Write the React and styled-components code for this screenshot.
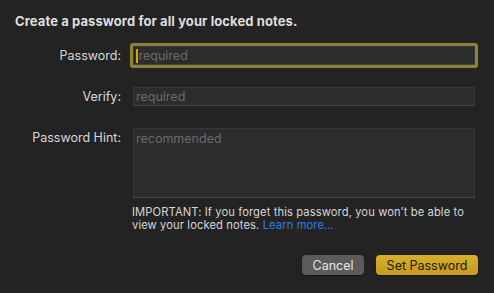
import React from "react";
import styled, { createGlobalStyle } from "styled-components";

const Global = createGlobalStyle`
  html, body { margin: 0; padding: 0; background: #232323; }
  body { font-family: Inter, "Noto Sans", "Liberation Sans", sans-serif; -webkit-font-smoothing: antialiased; }
`;

const Dialog = styled.div`
  width: 494px;
  height: 293px;
  box-sizing: border-box;
  background: #232323;
  padding: 13px 16px 0 15px;
  display: flex;
  flex-direction: column;
`;

const Title = styled.h1`
  margin: 0;
  font-size: 13px;
  line-height: 16px;
  font-weight: 700;
  color: #dedede;
  letter-spacing: 0.1px;
`;

const Form = styled.div`
  display: grid;
  grid-template-columns: 106px 342px;
  column-gap: 12px;
  row-gap: 22px;
  margin-top: 17px;
  align-items: center;
`;

const Label = styled.label`
  text-align: right;
  font-size: 12.5px;
  line-height: 19px;
  color: #d8d8d8;
  align-self: ${(p) => (p.$top ? "start" : "center")};
`;

const Field = styled.div`
  box-sizing: border-box;
  height: ${(p) => p.$h || 19}px;
  background: #2c2c2c;
  border: 1px solid #363636;
  border-bottom-color: #474747;
  border-radius: ${(p) => (p.$focused ? "1px" : "0")};
  box-shadow: ${(p) => (p.$focused ? "0 0 0 3px #8a8434" : "none")};
  display: flex;
  align-items: ${(p) => (p.$multi ? "flex-start" : "center")};
  padding: ${(p) => (p.$multi ? "2px 2px" : "0 2px")};
  font-size: 12.5px;
  line-height: 16px;
`;

const Caret = styled.span`
  display: inline-block;
  width: 1.5px;
  height: 14px;
  background: #d9a21e;
  margin-right: 1px;
`;

const Placeholder = styled.span`
  color: #6a6a6a;
`;

const Note = styled.p`
  margin: 8px 0 0 117px;
  font-size: 11.2px;
  line-height: 13px;
  letter-spacing: 0.1px;
  color: #d6d6d6;
  width: 336px;
`;

const Link = styled.a`
  color: #2a7de8;
  text-decoration: none;
`;

const Buttons = styled.div`
  display: flex;
  justify-content: flex-end;
  gap: 12px;
  margin-top: 23px;
`;

const Button = styled.button`
  box-sizing: border-box;
  height: 20px;
  width: ${(p) => p.$w}px;
  border: none;
  border-radius: 4px;
  font-family: inherit;
  font-size: 12.5px;
  padding: 0;
  color: ${(p) => (p.$primary ? "#1f1a0a" : "#e6e6e6")};
  background: ${(p) =>
    p.$primary ? "linear-gradient(#d8ae2c, #c79c1f)" : "#5b5b5b"};
  box-shadow: 0 0.5px 1px rgba(0, 0, 0, 0.4);
`;

export default function App() {
  return (
    <>
      <Global />
      <Dialog>
        <Title>Create a password for all your locked notes.</Title>
        <Form>
          <Label>Password:</Label>
          <Field $focused>
            <Caret />
            <Placeholder>required</Placeholder>
          </Field>
          <Label>Verify:</Label>
          <Field>
            <Placeholder>required</Placeholder>
          </Field>
          <Label $top>Password Hint:</Label>
          <Field $h={70} $multi>
            <Placeholder>recommended</Placeholder>
          </Field>
        </Form>
        <Note>
          IMPORTANT: If you forget this password, you won’t be able to view
          your locked notes. <Link href="#">Learn more…</Link>
        </Note>
        <Buttons>
          <Button $w={62}>Cancel</Button>
          <Button $w={102} $primary>
            Set Password
          </Button>
        </Buttons>
      </Dialog>
    </>
  );
}
